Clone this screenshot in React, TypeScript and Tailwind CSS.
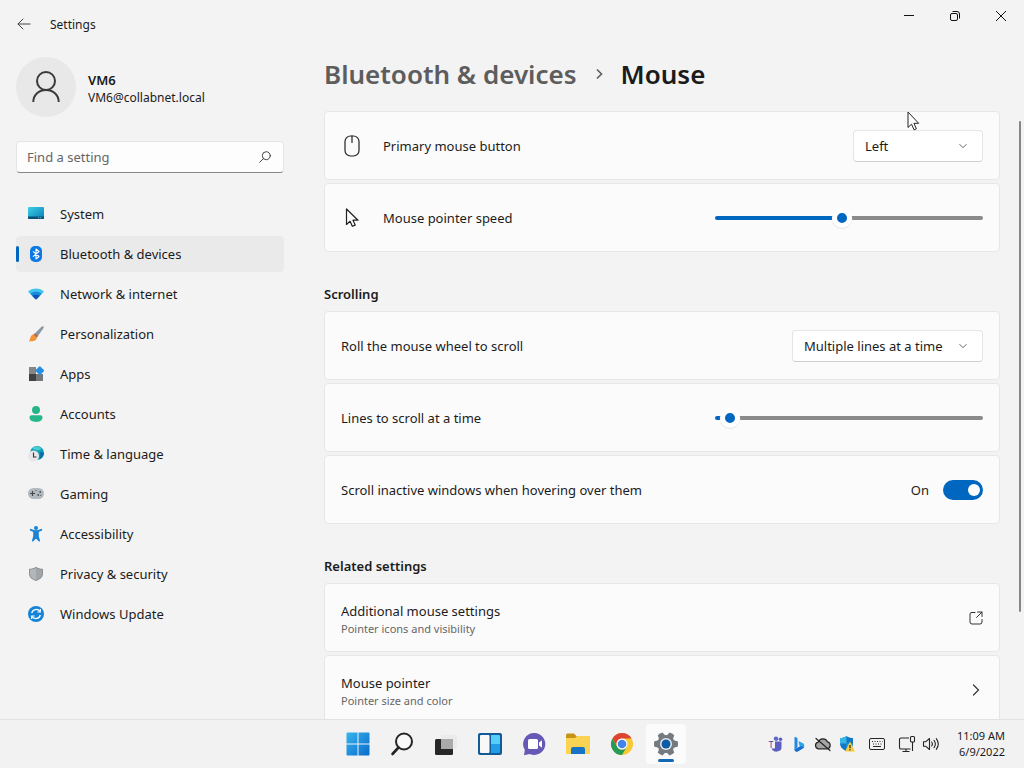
import { useState, type CSSProperties, type ReactNode } from "react";

const navItems = [
  { label: "System", icon: <SystemIcon /> },
  { label: "Bluetooth & devices", icon: <BluetoothIcon /> },
  { label: "Network & internet", icon: <NetworkIcon /> },
  { label: "Personalization", icon: <BrushIcon /> },
  { label: "Apps", icon: <AppsIcon /> },
  { label: "Accounts", icon: <AccountsIcon /> },
  { label: "Time & language", icon: <TimeIcon /> },
  { label: "Gaming", icon: <GamingIcon /> },
  { label: "Accessibility", icon: <AccessibilityIcon /> },
  { label: "Privacy & security", icon: <ShieldIcon /> },
  { label: "Windows Update", icon: <UpdateIcon /> },
];

const taskbarApps = [
  { label: "Start", icon: <StartIcon /> },
  { label: "Search", icon: <TaskSearchIcon /> },
  { label: "Task view", icon: <TaskViewIcon /> },
  { label: "Widgets", icon: <WidgetsIcon /> },
  { label: "Chat", icon: <ChatIcon /> },
  { label: "File Explorer", icon: <FolderIcon /> },
  { label: "Google Chrome", icon: <ChromeIcon /> },
  { label: "Settings", icon: <GearIcon />, active: true },
];

const trayItems = [
  { label: "Microsoft Teams", icon: <TeamsIcon /> },
  { label: "Bing", icon: <BingIcon /> },
  { label: "OneDrive", icon: <CloudOffIcon /> },
  { label: "Windows Security", icon: <DefenderIcon /> },
  { label: "Touch keyboard", icon: <KeyboardIcon />, wide: true },
  { label: "Network", icon: <EthernetIcon /> },
  { label: "Volume", icon: <VolumeIcon /> },
];

export default function App() {
  const [hover, setHover] = useState(true);

  return (
    <div className="relative flex h-screen flex-col overflow-hidden bg-[#f3f3f3] font-['Noto_Sans','Open_Sans',sans-serif] text-[13px] text-[#1b1b1b]">
      <TitleBar />
      <div className="flex min-h-0 flex-1">
        <Sidebar />
        <main className="relative min-w-0 flex-1 overflow-hidden px-6">
          <h1 className="flex h-[63px] items-start pt-2 text-[26px] leading-9 font-semibold">
            <a href="#devices" className="text-[#5d5d5d]">
              Bluetooth &amp; devices
            </a>
            <svg width="10" height="12" viewBox="0 0 10 12" className="mx-[17px] mt-3" fill="none" stroke="#5d5d5d" strokeWidth="1.6">
              <path d="M3 1.5 7.5 6 3 10.5" />
            </svg>
            <span>Mouse</span>
          </h1>

          <div className="flex flex-col gap-[3px]">
            <Row icon={<MouseIcon />} label="Primary mouse button" htmlFor="primary">
              <Dropdown id="primary" className="w-[130px]" options={["Left", "Right"]} />
            </Row>
            <Row icon={<PointerIcon />} label="Mouse pointer speed" htmlFor="speed">
              <Slider id="speed" min={1} max={20} initial={10} />
            </Row>
          </div>

          <SectionTitle>Scrolling</SectionTitle>
          <div className="flex flex-col gap-[3px]">
            <Row label="Roll the mouse wheel to scroll" htmlFor="wheel">
              <Dropdown id="wheel" className="w-[191px]" options={["Multiple lines at a time", "One screen at a time"]} />
            </Row>
            <Row label="Lines to scroll at a time" htmlFor="lines">
              <Slider id="lines" min={1} max={100} initial={3} />
            </Row>
            <Row label="Scroll inactive windows when hovering over them" htmlFor="inactive">
              <span className="mr-3.5 pt-0.5">{hover ? "On" : "Off"}</span>
              <input
                id="inactive"
                type="checkbox"
                role="switch"
                checked={hover}
                onChange={(e) => setHover(e.target.checked)}
                className="flex h-5 w-10 appearance-none items-center rounded-full bg-[#8a8a8a] px-[3px] before:h-3 before:w-3 before:rounded-full before:bg-white checked:justify-end checked:bg-[#0067c0]"
              />
            </Row>
          </div>

          <SectionTitle>Related settings</SectionTitle>
          <div className="flex flex-col gap-[3px]">
            <LinkRow title="Additional mouse settings" text="Pointer icons and visibility">
              <svg width="14" height="14" viewBox="0 0 14 14" fill="none" stroke="#333" strokeLinecap="round" strokeLinejoin="round">
                <path d="M6 1.5H3A1.7 1.7 0 0 0 1 3v8a2 2 0 0 0 2 2h8a2 2 0 0 0 2-2V8.5M8.5 1H13v4.500M13 1 7.500 6.500" />
              </svg>
            </LinkRow>
            <LinkRow title="Mouse pointer" text="Pointer size and color">
              <svg width="14" height="14" viewBox="0 0 14 14" fill="none" stroke="#333" strokeWidth="1.2" strokeLinecap="round">
                <path d="m4.500 2 5 5-5 5" />
              </svg>
            </LinkRow>
          </div>

          <div className="absolute top-[73px] right-[3px] h-[491px] w-0.5 rounded-full bg-[#868686]" />
        </main>
      </div>
      <Taskbar />

      <svg className="absolute top-[111px] left-[907px]" width="13" height="20" viewBox="0 0 13 20">
        <path d="M1 1v15.500l3.500-3.300 2.600 5.600 2.300-1-2.500-5.500H11.700z" fill="#fff" stroke="#222" />
      </svg>
    </div>
  );
}

function TitleBar() {
  return (
    <header className="flex h-12 shrink-0 items-start justify-between">
      <div className="flex h-12 items-center pl-4 text-xs">
        <button aria-label="Back" className="mr-[18px] flex h-4 w-4 items-center justify-center">
          <svg width="14" height="12" viewBox="0 0 14 12" fill="none" stroke="#444" strokeLinecap="round" strokeLinejoin="round">
            <path d="M13 6H1M6 1 1 6l5 5" />
          </svg>
        </button>
        <span className="pt-0.5">Settings</span>
      </div>
      <div className="flex">
        <WindowButton label="Minimize">
          <path d="M1 5.500h10" />
        </WindowButton>
        <WindowButton label="Restore">
          <rect x="1.500" y="3.500" width="7" height="7" rx="1.500" />
          <path d="M3.500 1.500H8a2.500 2.500 0 0 1 2.500 2.500v4.500" />
        </WindowButton>
        <WindowButton label="Close">
          <path d="m1 1 10 10M11 1 1 11" />
        </WindowButton>
      </div>
    </header>
  );
}

function WindowButton({ label, children }: { label: string; children: ReactNode }) {
  return (
    <button aria-label={label} className="flex h-8 w-[46px] items-center justify-center">
      <svg width="12" height="12" viewBox="0 0 12 12" fill="none" stroke="#111">
        {children}
      </svg>
    </button>
  );
}

function Sidebar() {
  return (
    <aside className="w-[300px] shrink-0 px-4 pt-[9px]">
      <div className="flex items-center">
        <div className="flex h-[60px] w-[60px] items-center justify-center rounded-full bg-[#e8e8e8]">
          <svg width="28" height="32" viewBox="0 0 28 32" fill="none" stroke="#3a3a3a" strokeWidth="2">
            <circle cx="14" cy="10" r="9" />
            <path d="M1.300 31C1.300 23.500 7 19 14 19s12.700 4.500 12.700 12" />
          </svg>
        </div>
        <div className="ml-3 pt-0.5">
          <p className="text-[13px] leading-5 font-semibold">VM6</p>
          <p className="text-xs leading-4">VM6@collabnet.local</p>
        </div>
      </div>

      <div className="mt-6 flex h-8 items-center rounded-sm border border-[#e5e5e5] border-b-[#868686] bg-[#fdfdfd] pr-3 pl-2.5">
        <input
          type="search"
          aria-label="Find a setting"
          placeholder="Find a setting"
          className="min-w-0 flex-1 bg-transparent pt-0.5 outline-none placeholder:text-[#666]"
        />
        <svg width="12" height="12" viewBox="0 0 12 12" fill="none" stroke="#444" strokeLinecap="round">
          <circle cx="7.300" cy="4.700" r="4" />
          <path d="M4.400 7.600.7 11.300" />
        </svg>
      </div>

      <nav className="mt-[23px] flex flex-col gap-1">
        {navItems.map((item) => {
          const active = item.label === "Bluetooth & devices";
          return (
            <a
              key={item.label}
              href="#"
              aria-current={active ? "page" : undefined}
              className={`flex h-9 items-center rounded ${active ? "bg-[#eaeaea]" : ""}`}
            >
              <span className={`mr-[9px] h-4 w-[3px] rounded-full ${active ? "bg-[#0067c0]" : ""}`} />
              {item.icon}
              <span className="ml-4 pt-0.5">{item.label}</span>
            </a>
          );
        })}
      </nav>
    </aside>
  );
}

function SectionTitle({ children }: { children: ReactNode }) {
  return <h2 className="pt-8 pb-[7px] text-[13px] leading-5 font-semibold">{children}</h2>;
}

type RowProps = { icon?: ReactNode; label: string; htmlFor: string; children: ReactNode };

function Row({ icon, label, htmlFor, children }: RowProps) {
  return (
    <div className="flex h-[69px] items-center rounded border border-[#e7e7e7] bg-[#fbfbfb] px-4">
      {icon && <span className="mr-5 flex w-[22px] justify-center">{icon}</span>}
      <label htmlFor={htmlFor} className="flex-1 pt-0.5">
        {label}
      </label>
      {children}
    </div>
  );
}

function LinkRow({ title, text, children }: { title: string; text: string; children: ReactNode }) {
  return (
    <a href="#" className="flex h-[69px] items-center justify-between rounded border border-[#e7e7e7] bg-[#fbfbfb] px-4">
      <span className="pt-0.5">
        <span className="block leading-5">{title}</span>
        <span className="block text-[11px] leading-4 text-[#666]">{text}</span>
      </span>
      {children}
    </a>
  );
}

function Dropdown({ id, className, options }: { id: string; className: string; options: string[] }) {
  return (
    <div className={`relative ${className}`}>
      <select
        id={id}
        className="h-8 w-full appearance-none rounded border border-[#e5e5e5] border-b-[#cfcfcf] bg-white pt-0.5 pr-8 pl-[11px]"
      >
        {options.map((o) => (
          <option key={o}>{o}</option>
        ))}
      </select>
      <svg className="pointer-events-none absolute top-3 right-4" width="8" height="8" viewBox="0 0 8 8" fill="none" stroke="#666">
        <path d="m.5 2.200 3.500 3.500 3.500-3.500" />
      </svg>
    </div>
  );
}

function Slider({ id, min, max, initial }: { id: string; min: number; max: number; initial: number }) {
  const [value, setValue] = useState(initial);
  const fill = ((value - min) / (max - min)) * 100;
  return (
    <input
      id={id}
      type="range"
      min={min}
      max={max}
      value={value}
      onChange={(e) => setValue(Number(e.target.value))}
      style={{ "--fill": `${fill}%` } as CSSProperties}
      className="h-5 w-[268px] appearance-none bg-transparent [&::-webkit-slider-runnable-track]:h-1 [&::-webkit-slider-runnable-track]:rounded-full [&::-webkit-slider-runnable-track]:bg-[linear-gradient(to_right,#0067c0_max(var(--fill),6px),#8a8a8a_max(var(--fill),6px))] [&::-webkit-slider-thumb]:-mt-2 [&::-webkit-slider-thumb]:h-5 [&::-webkit-slider-thumb]:w-5 [&::-webkit-slider-thumb]:appearance-none [&::-webkit-slider-thumb]:rounded-full [&::-webkit-slider-thumb]:border-5 [&::-webkit-slider-thumb]:border-white [&::-webkit-slider-thumb]:bg-[#0067c0] [&::-webkit-slider-thumb]:shadow-[0_1px_1px_#e5e5e5]"
    />
  );
}

function Taskbar() {
  return (
    <footer className="z-10 grid h-12 shrink-0 grid-cols-[1fr_auto_1fr] items-center bg-[#f2f2f2] shadow-[0_-1px_0_#e2e2e2]">
      <div className="col-start-2 flex gap-1">
        {taskbarApps.map((app) => (
          <button
            key={app.label}
            aria-label={app.label}
            className={`relative flex h-10 w-10 items-center justify-center rounded ${app.active ? "bg-[#fbfbfb]" : ""}`}
          >
            {app.icon}
            {app.active && <span className="absolute bottom-0.5 h-[3px] w-4 rounded-full bg-[#1268b3]" />}
          </button>
        ))}
      </div>
      <div className="flex items-center justify-end pr-[19px]">
        {trayItems.map((item) => (
          <button
            key={item.label}
            aria-label={item.label}
            className={`flex h-10 items-center justify-center ${item.wide ? "w-9" : "w-6"}`}
          >
            {item.icon}
          </button>
        ))}
        <button className="w-[62px] text-right text-[11px] leading-4 whitespace-nowrap">
          <span className="block">11:09 AM</span>
          <span className="block">6/9/2022</span>
        </button>
      </div>
    </footer>
  );
}

/* Row icons */

function MouseIcon() {
  return (
    <svg width="16" height="22" viewBox="0 0 16 22" fill="none" stroke="#222" strokeWidth="1.200" strokeLinecap="round">
      <rect x="1" y="1" width="14" height="20" rx="5.500" />
      <path d="M8 1v6.500" />
    </svg>
  );
}

function PointerIcon() {
  return (
    <svg width="16" height="20" viewBox="0 0 16 20" fill="none" stroke="#222" strokeWidth="1.200" strokeLinejoin="round">
      <path d="M2.500 1v15.500l3.600-3.200 2.200 5 2.900-1.200-2.200-4.900h5z" />
    </svg>
  );
}

/* Navigation icons */

function SystemIcon() {
  return (
    <svg width="16" height="16" viewBox="0 0 16 16">
      <defs>
        <linearGradient id="sys" x1="0" y1="0" x2="1" y2="1">
          <stop stopColor="#3dd0e6" />
          <stop offset="1" stopColor="#0a7cb5" />
        </linearGradient>
      </defs>
      <rect y="1" width="16" height="12" rx="1" fill="url(#sys)" />
      <path d="M0 10.500h16V12a1 1 0 0 1-1 1H1a1 1 0 0 1-1-1z" fill="#075078" />
      <path d="M10 11.700h1.200m1 0h1.200" stroke="#7ed6f2" strokeWidth=".8" />
    </svg>
  );
}

function BluetoothIcon() {
  return (
    <svg width="16" height="16" viewBox="0 0 16 16">
      <rect x="2" width="12" height="16" rx="5" fill="#0b78e3" />
      <path d="m5 5.300 6 5.200-3 2.500V3l3 2.500-6 5.200" fill="none" stroke="#fff" strokeWidth="1.100" strokeLinejoin="round" />
    </svg>
  );
}

function NetworkIcon() {
  return (
    <svg width="16" height="16" viewBox="0 0 16 16">
      <path d="M.6 6.200Q0 5.300.8 4.700C5 1.600 11 1.600 15.200 4.700q.8.600.2 1.500L8.700 13q-.7.600-1.400 0z" fill="#45c5ee" />
      <path d="M2.300 7.800C5.500 5.200 10.500 5.200 13.700 7.800L8.700 13q-.7.600-1.400 0z" fill="#198bdc" />
      <path d="M4.200 9.800c2.300-1.500 5.300-1.500 7.600 0L8.700 13q-.7.600-1.400 0z" fill="#1253b5" />
    </svg>
  );
}

function BrushIcon() {
  return (
    <svg width="16" height="16" viewBox="0 0 16 16">
      <path d="M15.300.3c.7.500.6 1.300.1 2L9.200 11 6 8.200 13.500.7c.6-.5 1.200-.7 1.800-.4z" fill="#8a9aa5" />
      <path d="m6.900 7.200 3.200 2.600L8.500 12 5 8.900z" fill="#b1714c" />
      <path d="M5.200 8.400 8.700 11.400C8.900 14 6.500 15.800 0.700 15.200 2.500 14 1.700 9.400 5.200 8.400z" fill="#f3943a" />
    </svg>
  );
}

function AppsIcon() {
  return (
    <svg width="16" height="16" viewBox="0 0 16 16">
      <path d="M1 1h7v7H1z" fill="#858585" />
      <path d="M1 8h7v7H1z" fill="#3e4245" />
      <path d="M8 8h7v7H8z" fill="#72777a" />
      <rect x="8.500" y="1.300" width="6.600" height="6.600" rx=".8" transform="rotate(45 11.800 4.600)" fill="#268fe2" />
    </svg>
  );
}

function AccountsIcon() {
  return (
    <svg width="16" height="16" viewBox="0 0 16 16">
      <circle cx="8" cy="4" r="4" fill="#26b58a" />
      <path d="M3.500 9.300h9A2 2 0 0 1 14.500 11.300C14.500 14.300 12 16 8 16s-6.500-1.700-6.500-4.700a2 2 0 0 1 2-2z" fill="#25b78a" />
    </svg>
  );
}

function TimeIcon() {
  return (
    <svg width="16" height="16" viewBox="0 0 16 16">
      <circle cx="9" cy="7" r="7" fill="#149db5" />
      <path d="M4 2.200C8-1 12 .5 13.500 3L10 4.500 6.500 3.800z" fill="#46cfd0" />
      <path d="m12 6 4 .5c0 3-1.800 5.700-4.500 6.800z" fill="#0873a6" />
      <circle cx="5.500" cy="10" r="5.500" fill="#e9e6e8" />
      <path d="M5.500 6.500v4.500H8.500" fill="none" stroke="#333" strokeWidth="1.100" />
    </svg>
  );
}

function GamingIcon() {
  return (
    <svg width="16" height="16" viewBox="0 0 16 16">
      <rect y="2" width="16" height="11" rx="5.500" fill="#b2bac0" />
      <path d="M2 7.500h5M4.500 5v5" stroke="#42484c" strokeWidth="1.200" />
      <g fill="#4c5358">
        <circle cx="10.200" cy="9" r=".9" />
        <circle cx="12.200" cy="6" r=".9" />
        <circle cx="8" cy="4.500" r=".6" />
        <circle cx="12.800" cy="9.300" r=".6" />
      </g>
    </svg>
  );
}

function AccessibilityIcon() {
  return (
    <svg width="16" height="16" viewBox="0 0 16 16" fill="#1c83d4" stroke="#1c83d4" strokeLinecap="round" strokeLinejoin="round">
      <circle cx="8" cy="2" r="2" stroke="none" />
      <path d="M2.800 3.800 6 5.200h4l3.200-1.400" fill="none" strokeWidth="2" />
      <path d="M6 5.200h4v5l1.200 4.600L8 11.500l-3.200 3.300L6 10.200z" strokeWidth="1.600" />
    </svg>
  );
}

function ShieldIcon() {
  return (
    <svg width="16" height="16" viewBox="0 0 16 16">
      <path d="M8 .7c2 1.600 4.500 2 7 2v5C15 11.500 12 13.500 8 15c-4-1.500-7-3.500-7-7.300v-5c2.500 0 5-.4 7-2z" fill="#8d9295" />
      <path d="M8 2c1.800 1.200 3.900 1.600 6 1.700v4C14 10.800 11.500 12.600 8 14z" fill="#a1a5a8" />
      <path d="M8 2C6.200 3.200 4.100 3.600 2 3.700v4C2 10.800 4.500 12.600 8 14z" fill="#b3b6b8" />
    </svg>
  );
}

function UpdateIcon() {
  return (
    <svg width="16" height="16" viewBox="0 0 16 16">
      <circle cx="8" cy="8" r="8" fill="#1484d6" />
      <path d="M3.700 7A4.600 4.600 0 0 1 12 5.500M12.300 9A4.600 4.600 0 0 1 4 10.500" fill="none" stroke="#fff" strokeWidth="1.300" />
      <path d="M12.300 3v3h-3M3.700 13v-3h3" fill="none" stroke="#fff" strokeWidth="1.200" />
    </svg>
  );
}

/* Taskbar icons */

function StartIcon() {
  return (
    <svg width="24" height="24" viewBox="0 0 24 24">
      <defs>
        <linearGradient id="start" gradientUnits="userSpaceOnUse" x1="0" y1="0" x2="24" y2="24">
          <stop stopColor="#38b6ee" />
          <stop offset="1" stopColor="#0869cb" />
        </linearGradient>
      </defs>
      <path d="M1.500.5h10v11H.5v-10a1 1 0 0 1 1-1zM12.500.5h10a1 1 0 0 1 1 1v10h-11zM.5 12.500h11v11h-10a1 1 0 0 1-1-1zM12.500 12.500h11v10a1 1 0 0 1-1 1h-10z" fill="url(#start)" />
    </svg>
  );
}

function TaskSearchIcon() {
  return (
    <svg width="24" height="24" viewBox="0 0 24 24">
      <circle cx="14" cy="9.500" r="8" fill="#f8f8f8" stroke="#252525" strokeWidth="2" />
      <path d="M8.500 15.500 2.500 22" stroke="#252525" strokeWidth="2.600" strokeLinecap="round" />
    </svg>
  );
}

function TaskViewIcon() {
  return (
    <svg width="24" height="24" viewBox="0 0 24 24">
      <rect x="1" y="7" width="18" height="16" rx="1.500" fill="#272727" />
      <path d="M7 7h12v10H7z" fill="#aaa" />
      <path d="M7 7V4.500A1.500 1.500 0 0 1 8.500 3h13A1.500 1.500 0 0 1 23 4.500V15.500A1.500 1.500 0 0 1 21.500 17H19V7z" fill="#ebebeb" />
    </svg>
  );
}

function WidgetsIcon() {
  return (
    <svg width="24" height="24" viewBox="0 0 24 24">
      <rect y="1" width="24" height="22" rx="2" fill="#155a98" />
      <rect x="2" y="3" width="9.500" height="18" rx="1" fill="#f8f8f8" />
      <path d="M13 3h8a1 1 0 0 1 1 1v8.500h-9z" fill="#57cdfb" />
      <path d="M13 12.500h9V20a1 1 0 0 1-1 1h-8z" fill="#219ee8" />
    </svg>
  );
}

function ChatIcon() {
  return (
    <svg width="24" height="24" viewBox="0 0 24 24">
      <path d="M12.500 1a11 11 0 1 1-4.800 21L2 23.300l.8-5.500A11 11 0 0 1 12.500 1z" fill="#6559b5" />
      <rect x="6" y="7" width="10" height="10" rx="1.500" fill="#fff" />
      <path d="m17 10.500 3-2.300v7.600l-3-2.300z" fill="#fff" />
    </svg>
  );
}

function FolderIcon() {
  return (
    <svg width="26" height="24" viewBox="0 0 26 24">
      <path d="M1 3a1.500 1.500 0 0 1 1.500-1.500H9L11.500 4H24a1 1 0 0 1 1 1v5H1z" fill="#c49318" />
      <path d="M1 6h9l2-2h12a1 1 0 0 1 1 1v16a1 1 0 0 1-1 1H1z" fill="#fbd352" />
      <path d="M6 17a2 2 0 0 1 2-2h10a2 2 0 0 1 2 2v5H6z" fill="#1674c5" />
    </svg>
  );
}

function ChromeIcon() {
  return (
    <svg width="24" height="24" viewBox="0 0 24 24">
      <circle cx="12" cy="12" r="11" fill="#f9c835" />
      <path d="M2.470 6.500A11 11 0 0 1 21.530 6.500H12A5.500 5.500 0 0 0 7.240 14.750z" fill="#dc4436" />
      <path d="M2.470 6.500A11 11 0 0 0 12 23L16.760 14.750A5.500 5.500 0 0 1 7.240 14.750z" fill="#279a55" />
      <circle cx="12" cy="12" r="5.500" fill="#fff" />
      <circle cx="12" cy="12" r="4.300" fill="#4283ec" />
    </svg>
  );
}

function GearIcon() {
  return (
    <svg width="24" height="24" viewBox="0 0 24 24">
      <g fill="#747a7e">
        <circle cx="12" cy="12" r="9" />
        {[30, 90, 150, 210, 270, 330].map((a) => (
          <path key={a} d="M9.300.3q2.700-.6 5.400 0L16 6H8z" transform={`rotate(${a} 12 12)`} />
        ))}
      </g>
      <circle cx="12" cy="12" r="6" fill="#e6edf1" />
      <circle cx="12" cy="12" r="4.500" fill="#0d5ba5" />
    </svg>
  );
}

/* Tray icons */

function TeamsIcon() {
  return (
    <svg width="16" height="16" viewBox="0 0 16 16">
      <circle cx="9" cy="2.800" r="2.300" fill="#6269c8" />
      <circle cx="13.500" cy="3.300" r="1.700" fill="#5059c9" />
      <path d="M6 5.500h8.500V11a4 4 0 0 1-3.500 4.300A5 5 0 0 1 4.500 12.500z" fill="#5a5fc0" />
      <rect x="0" y="4" width="8" height="8.500" rx="1" fill="#f4f4f8" />
      <text x="4" y="11.500" textAnchor="middle" fontSize="9" fill="#3f449a">T</text>
    </svg>
  );
}

function BingIcon() {
  return (
    <svg width="16" height="16" viewBox="0 0 16 16">
      <path d="m3.500.8 3 1.200v9l-3 3z" fill="#2288e5" />
      <path d="M7.500 5 12 7.300c2 1.200 1.700 4-.2 5.200L6.500 15.500c-1.500.5-3-.5-3-2l6-3.500-1.200-.6z" fill="#29a9e4" />
      <path d="M3.500 13.500 7 11.500l3-1.500 3 1.200c-.4 1-6.500 4.300-6.500 4.300-1.500.5-3-.5-3-2z" fill="#1d6cd5" />
    </svg>
  );
}

function CloudOffIcon() {
  return (
    <svg width="18" height="16" viewBox="0 0 18 16" fill="#a5a5a5" stroke="#252525" strokeWidth="1.200" strokeLinecap="round">
      <path d="M4.500 12.800a3.400 3.400 0 0 1-.3-6.700 5 5 0 0 1 9.300-.3 3.600 3.600 0 0 1-.2 7z" />
      <path d="m2 2.500 14 12" />
    </svg>
  );
}

function DefenderIcon() {
  return (
    <svg width="16" height="16" viewBox="0 0 16 16">
      <path d="M7.500 0c2 1.400 4 2 6.500 2v5c0 4-2.500 6.500-6.500 8C3.500 13.500 1 11 1 7V2c2.500 0 4.500-.6 6.500-2z" fill="#1278c5" />
      <path d="M7.500 0v7.500H1V2c2.500 0 4.500-.6 6.500-2z" fill="#35b5e5" />
      <path d="M7.500 7.500H14C14 11 11.500 13.500 7.500 15z" fill="#1c9ae0" />
      <path d="m11 5.500 5 10H6z" fill="#f8ca3e" />
      <path d="M11 9v3.200m0 1v1.300" stroke="#292929" strokeWidth="1.200" />
    </svg>
  );
}

function KeyboardIcon() {
  return (
    <svg width="16" height="14" viewBox="0 0 16 14" fill="none" stroke="#252525">
      <rect x=".5" y="1.500" width="15" height="11" rx="1.500" />
      <path d="M3 4.500h1m1.500 0h1m1.500 0h1m1.500 0h1m1.500 0h.5M4 7h1m1.500 0h1m1.500 0h1m1.500 0h1M4 9.500h8" />
    </svg>
  );
}

function EthernetIcon() {
  return (
    <svg width="18" height="18" viewBox="0 0 18 18" fill="none" stroke="#252525" strokeWidth="1.100">
      <path d="M11 3H3a1.500 1.500 0 0 0-1.500 1.500v8A1.500 1.500 0 0 0 3 14h9.500M4.500 16.500h7M8 14v2.500M14.500 7v9" />
      <rect x="12.500" y="1.500" width="4" height="5.500" rx="1" />
    </svg>
  );
}

function VolumeIcon() {
  return (
    <svg width="18" height="16" viewBox="0 0 18 16" fill="none" stroke="#252525" strokeWidth="1.100" strokeLinecap="round" strokeLinejoin="round">
      <path d="M1.500 5.700h2.300L7.500 2.500v11L3.800 10.300H1.500zM9.700 6q1.400 2 0 4M12 4.300q2.700 3.700 0 7.400M14.300 2.700q4 5.300 0 10.600" />
    </svg>
  );
}
